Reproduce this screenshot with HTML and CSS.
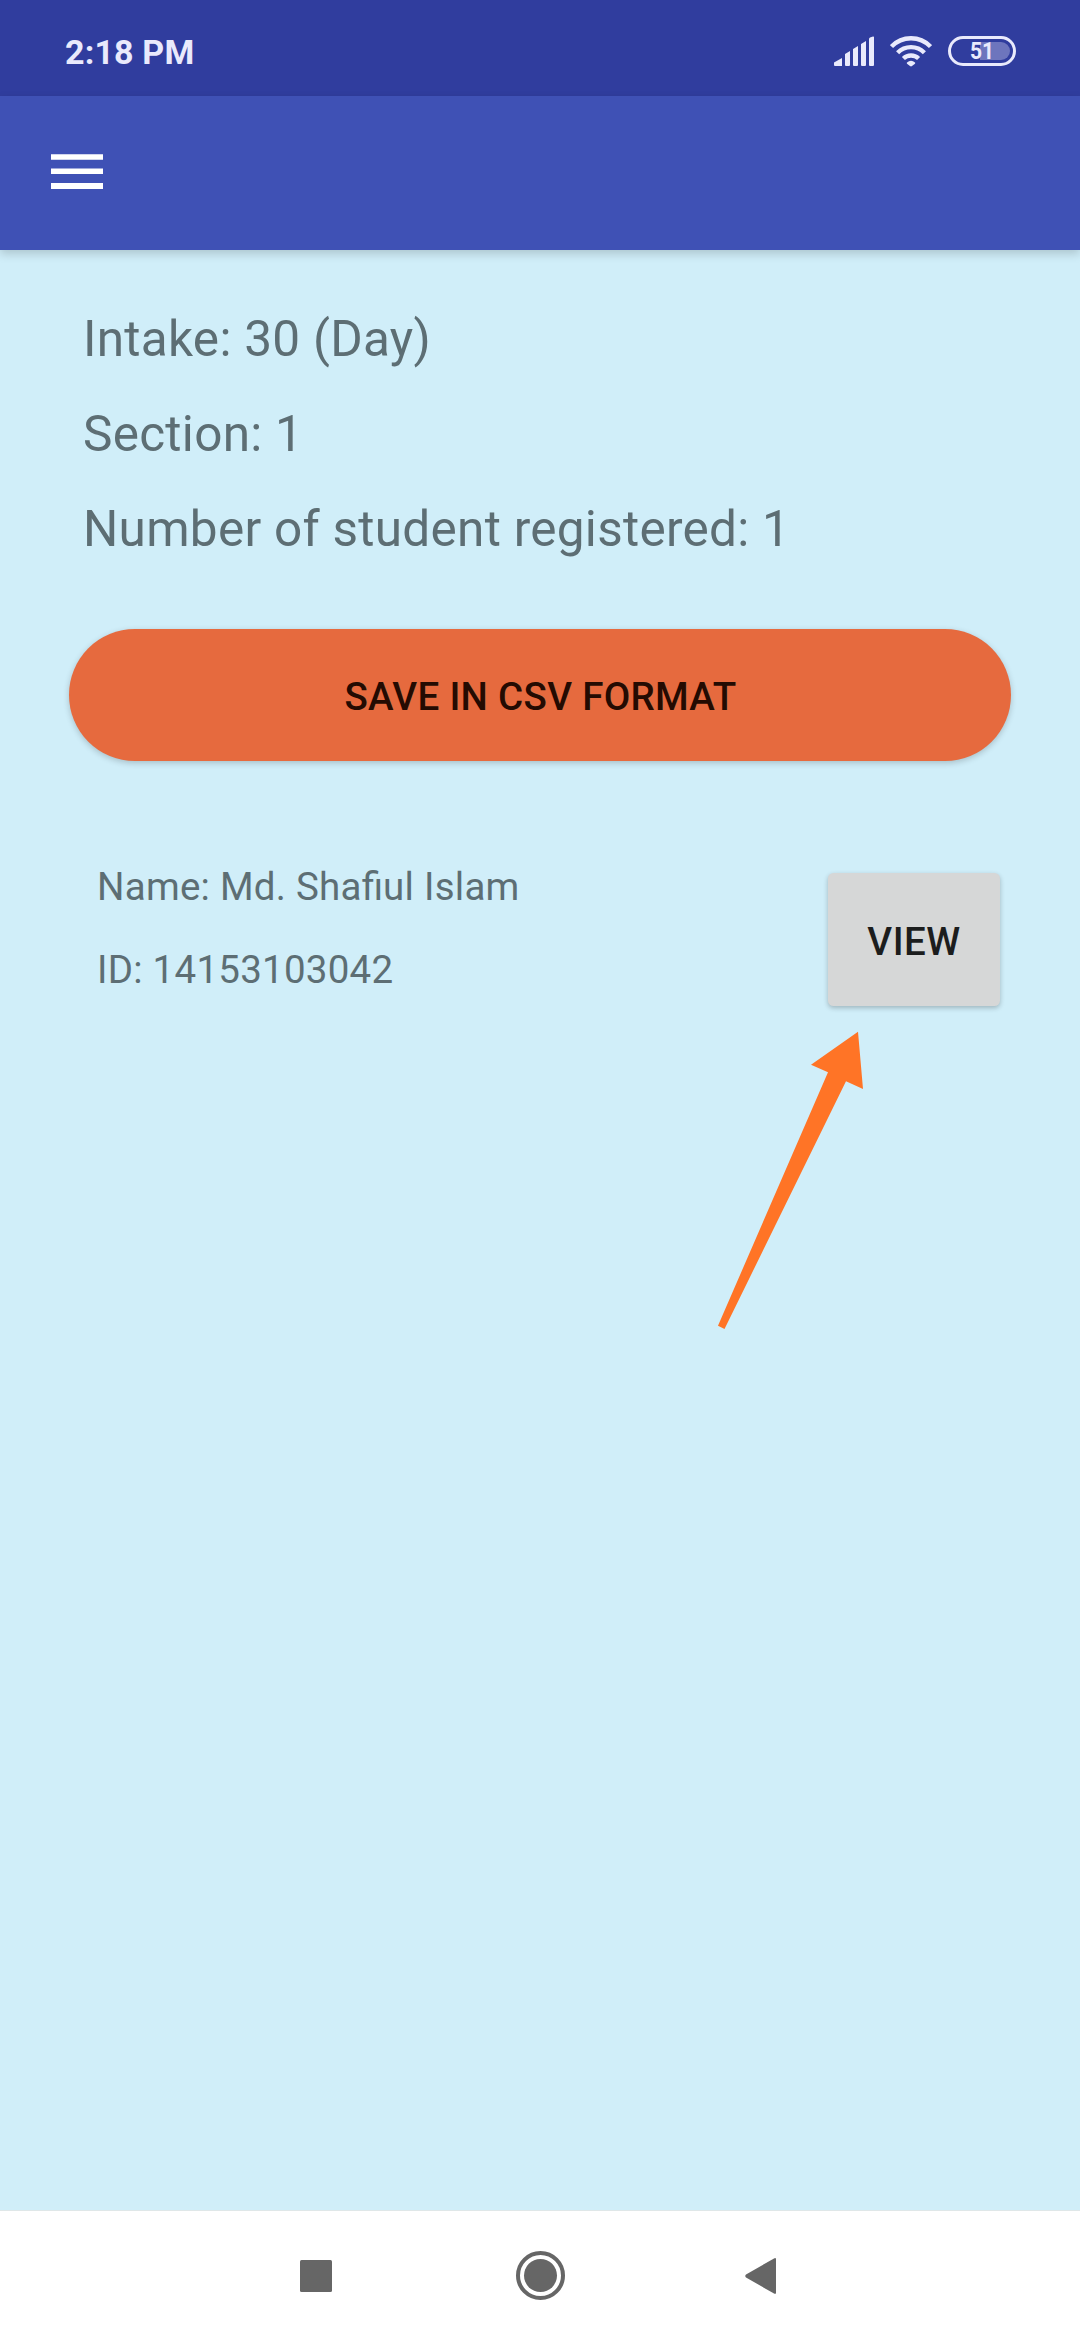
FILE: index.html
```html
<!DOCTYPE html>
<html lang="en">
<head>
<meta charset="utf-8">
<title>Intake</title>
<link rel="stylesheet" href="styles.css">
</head>
<body>
<div class="screen">
  <header class="status-bar">
    <span class="clock">2:18 PM</span>
    <div class="status-icons">
      <svg class="signal" width="42" height="32" viewBox="0 0 42 32">
        <path d="M0 26.5 8 22v8H1Q0 30 0 29ZM11 18l5-3v14q0 1-1 1h-3q-1 0-1-1ZM19 13l5-3v19q0 1-1 1h-3q-1 0-1-1ZM27 8l5-3v24q0 1-1 1h-3q-1 0-1-1ZM35 3q0-1 1-1.500L39 .6q1-.3 1 .7V29q0 1-1 1h-3q-1 0-1-1Z"/>
      </svg>
      <svg class="wifi" width="42" height="32" viewBox="0 0 42 32">
        <path class="wave" d="M1.500 10.600A27 27 0 0 1 40.500 10.600M7.600 16.700A19 19 0 0 1 34.400 16.700M13.400 22.500A11 11 0 0 1 28.600 22.500"/>
        <path d="M17 26.600Q21 22.800 25 26.600Q25.500 27.200 25 27.700L22 30q-1 .8-2 0L17 27.700Q16.500 27.200 17 26.600Z"/>
      </svg>
      <div class="battery"><span class="battery-level"></span><span class="battery-text">51</span></div>
    </div>
  </header>
  <nav class="toolbar">
    <svg width="52" height="36" viewBox="0 0 52 36"><path d="M0 .3h52v5.400H0zM0 14.600h52V20H0zM0 29h52v6H0z" fill="#fff"/></svg>
  </nav>
  <main class="content">
    <section class="summary">
      <p>Intake: 30 (Day)</p>
      <p>Section: 1</p>
      <p>Number of student registered: 1</p>
    </section>
    <button class="save">SAVE IN CSV FORMAT</button>
    <section class="student">
      <div class="student-info">
        <p>Name: Md. Sha<span class="ligature">fi</span>ul Islam</p>
        <p>ID: 14153103042</p>
      </div>
      <button class="view">VIEW</button>
    </section>
    <svg class="arrow" width="148" height="300" viewBox="716 1030 148 300">
      <path d="M858 1031.700 811 1064.700 828 1072.300 718 1325.700 724.500 1329 846 1081.300 863 1089Z" fill="#ff7426"/>
    </svg>
  </main>
  <footer class="nav-bar">
    <svg width="32" height="32" viewBox="0 0 32 32"><rect width="32" height="32" rx="1.500"/></svg>
    <svg width="49" height="49" viewBox="0 0 49 49"><circle cx="24.500" cy="24.500" r="22.500" fill="none" stroke="#666" stroke-width="4"/><circle cx="24.500" cy="24.500" r="16.500"/></svg>
    <svg width="32" height="38" viewBox="0 0 32 38"><path d="M29 1.500Q31 .3 31 2.500v33Q31 37.700 29 36.500L1 20.500Q-.5 19 1 17.500Z"/></svg>
  </footer>
</div>
</body>
</html>
```

FILE: styles.css
```css
* { box-sizing: border-box; }
body { margin: 0; font-family: Roboto, "Liberation Sans", sans-serif; }
p { margin: 0; }
svg { display: block; flex: none; }
button { border: 0; font: 500 38.5px/45px Roboto, "Liberation Sans", sans-serif; }

.screen {
  width: 1080px;
  height: 2340px;
  display: flex;
  flex-direction: column;
  background: #d0eef9;
  overflow: hidden;
}

.status-bar {
  height: 96px;
  display: flex;
  justify-content: space-between;
  padding: 32px 64px 0 65px;
  background: #303d9e;
  color: #e9eafc;
}
.clock { font-size: 34px; font-weight: 700; line-height: 40px; letter-spacing: .16px; white-space: nowrap; }
.status-icons { display: flex; align-items: flex-start; padding-top: 3.500px; }
.status-icons svg { fill: #e9eafc; }
.signal { margin-right: 14px; }
.wifi { margin-right: 16px; }
.status-icons .wave { fill: none; stroke: #e9eafc; stroke-width: 4.400px; }
.battery {
  width: 68px;
  height: 30px;
  padding: 3px;
  border: 3px solid #e9eafc;
  border-radius: 15px;
  display: grid;
}
.battery-level {
  grid-area: 1 / 1;
  justify-self: end;
  width: 30px;
  height: 18px;
  border-radius: 0 9px 9px 0;
  background: #6d75bd;
}
.battery-text {
  grid-area: 1 / 1;
  justify-self: center;
  font-size: 24.500px;
  font-weight: 700;
  line-height: 18px;
  transform: scaleX(.86);
}

.toolbar {
  height: 154px;
  display: flex;
  align-items: flex-start;
  padding: 58px 51px 0;
  background: #3f51b5;
  box-shadow: 0 4px 9px rgba(0, 0, 0, .17);
}

.content { flex: 1; position: relative; padding: 42px 69px 0; }
.summary { padding-left: 14px; }
.summary p { font-size: 49.5px; line-height: 95px; letter-spacing: .27px; color: #5d6e74; white-space: nowrap; }

.save {
  display: block;
  width: 942px;
  height: 132px;
  margin-top: 52px;
  padding: 3px 0 0 1px;
  border-radius: 66px;
  background: #e66a3e;
  color: #240b02;
  letter-spacing: .3px;
  box-shadow: 0 2px 6px rgba(0, 0, 0, .2);
}

.student {
  display: flex;
  justify-content: space-between;
  align-items: flex-start;
  margin-top: 84px;
  padding: 0 11px 0 28px;
}
.student-info p { font-size: 38.5px; line-height: 83px; letter-spacing: .25px; color: #5d6e74; white-space: nowrap; }
.student-info .ligature { letter-spacing: 0; }
.view {
  width: 172px;
  height: 133px;
  margin-top: 28px;
  padding: 3px 0 0;
  border-radius: 5.500px;
  background: #d6d7d7;
  color: #1c1d1d;
  letter-spacing: .5px;
  box-shadow: 0 2px 5px rgba(0, 0, 0, .24);
}

/* Callout that points at the view button */
.arrow { position: absolute; left: 716px; top: 780px; }

.nav-bar {
  height: 130px;
  display: flex;
  align-items: center;
  padding-left: 300px;
  background: #fff;
  border-top: 1px solid #dfe7e8;
}
.nav-bar svg { fill: #666; }
.nav-bar svg + svg { margin-left: 184px; }
.nav-bar svg:last-child { margin-left: 180px; }
```
